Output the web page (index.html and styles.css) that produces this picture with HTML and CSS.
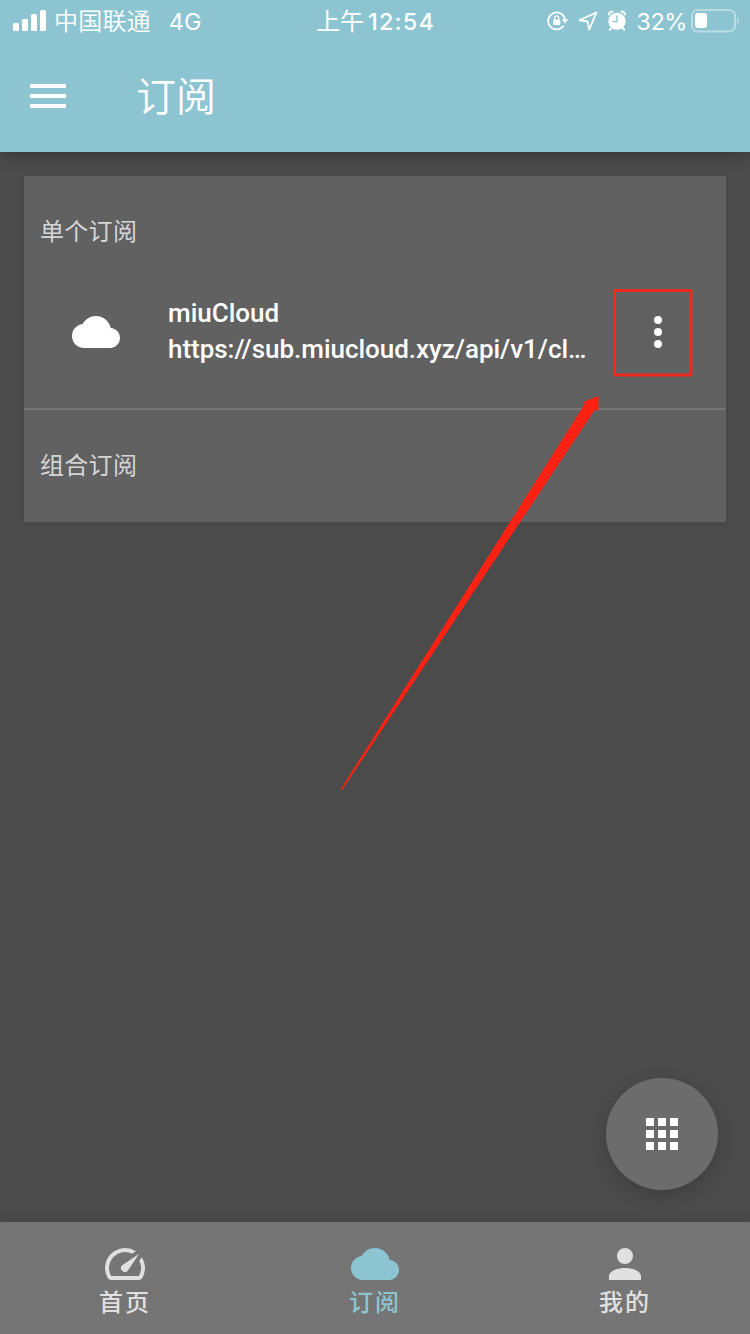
FILE: index.html
```html
<!DOCTYPE html>
<html lang="zh-CN">
<head>
<meta charset="utf-8">
<title>订阅</title>
<link rel="stylesheet" href="styles.css">
</head>
<body>
<div class="screen">
  <header class="header">
    <div class="status">
      <div class="status-left">
        <svg class="signal" viewBox="0 0 33 22" fill="#fff"><rect x="0" y="13" width="6" height="8" rx="1.5"/><rect x="9" y="9" width="6" height="12" rx="1.5"/><rect x="18" y="4" width="6" height="17" rx="1.5"/><rect x="27" y="0" width="6" height="21" rx="1.5"/></svg>
        <span class="carrier">中国联通</span>
        <span class="network">4G</span>
      </div>
      <div class="status-time"><span>上午</span><span class="clock">12:54</span></div>
      <div class="status-right">
        <svg class="lock" viewBox="0 0 24 22"><path d="M17.6 15.8A8.5 8.5 0 1 1 18.9 9" fill="none" stroke="#fff" stroke-width="1.7"/><path d="M15.8 9.2h6.4l-3.2 4.4z" fill="#fff"/><rect x="7.2" y="9.5" width="7" height="5.6" rx=".8" fill="#fff"/><path d="M8.7 10V8a2 2 0 0 1 4 0v2" fill="none" stroke="#fff" stroke-width="1.3"/></svg>
        <svg class="location" viewBox="0 0 20 20"><path d="M18.5 1.5L1.5 9.2l8 1.2L11.2 18.5z" fill="none" stroke="#fff" stroke-width="1.9" stroke-linejoin="round"/></svg>
        <svg class="alarm" viewBox="0 0 20 22"><circle cx="10" cy="11.2" r="8.6" fill="#fff"/><path d="M1.8 4.6A4 4 0 0 1 5.6 1.6M18.2 4.6a4 4 0 0 0-3.8-3M4.5 17.5L2.8 20M15.5 17.5l1.7 2.5" fill="none" stroke="#fff" stroke-width="2" stroke-linecap="round"/><path d="M10 5.6v6H5.4" fill="none" stroke="#8cc5d1" stroke-width="1.4"/></svg>
        <span class="percent">32%</span>
        <svg class="battery" viewBox="0 0 49 24"><rect x="1" y="1" width="43" height="21.5" rx="5.5" fill="none" stroke="#b9dce3" stroke-width="2"/><rect x="4" y="4" width="12" height="15" rx="3" fill="#fff"/><path d="M46 8.5c2.3 1 2.3 6 0 7z" fill="#b9dce3"/></svg>
      </div>
    </div>
    <div class="toolbar">
      <svg class="menu" viewBox="0 0 36 24" fill="#fff"><path d="M0 0h36v4H0zM0 10h36v4H0zM0 20h36v4H0z"/></svg>
      <h1 class="title">订阅</h1>
    </div>
  </header>

  <main class="content">
    <section class="card">
      <div class="subheader">单个订阅</div>
      <div class="item">
        <svg class="item-icon" viewBox="0 0 24 24" fill="#fff"><path d="M19.35 10.04C18.67 6.59 15.64 4 12 4 9.11 4 6.6 5.64 5.35 8.04 2.34 8.36 0 10.91 0 14c0 3.31 2.69 6 6 6h13c2.76 0 5-2.24 5-5 0-2.64-2.05-4.78-4.65-4.96z"/></svg>
        <div class="item-text">
          <div class="item-name">miuCloud</div>
          <div class="item-url">https://sub.miucloud.xyz/api/v1/cl…</div>
        </div>
        <div class="more"><svg class="dots" viewBox="0 0 8 32" fill="#fff"><circle cx="4" cy="4" r="4"/><circle cx="4" cy="16" r="4"/><circle cx="4" cy="28" r="4"/></svg></div>
      </div>
      <div class="group"><div class="subheader">组合订阅</div></div>
    </section>
  </main>

  <nav class="tabs">
    <div class="tab">
      <svg class="tab-icon" viewBox="0 0 24 24" fill="currentColor"><path d="M20.38 8.57l-1.23 1.85a8 8 0 0 1-.22 7.58H5.07A8 8 0 0 1 15.58 6.85l1.85-1.23A10 10 0 0 0 3.35 19a2 2 0 0 0 1.72 1h13.85a2 2 0 0 0 1.74-1 10 10 0 0 0-.27-10.44zm-9.79 6.84a2 2 0 0 0 2.83 0l5.66-8.49-8.49 5.66a2 2 0 0 0 0 2.83z"/></svg>
      <span class="tab-label">首页</span>
    </div>
    <div class="tab tab-active">
      <svg class="tab-icon" viewBox="0 0 24 24" fill="currentColor"><path d="M19.35 10.04C18.67 6.59 15.64 4 12 4 9.11 4 6.6 5.64 5.35 8.04 2.34 8.36 0 10.91 0 14c0 3.31 2.69 6 6 6h13c2.76 0 5-2.24 5-5 0-2.64-2.05-4.78-4.65-4.96z"/></svg>
      <span class="tab-label">订阅</span>
    </div>
    <div class="tab">
      <svg class="tab-icon" viewBox="0 0 24 24" fill="currentColor"><path d="M12 4a4 4 0 1 1 0 8 4 4 0 0 1 0-8m0 10c4.42 0 8 1.79 8 4v2H4v-2c0-2.21 3.58-4 8-4"/></svg>
      <span class="tab-label">我的</span>
    </div>
  </nav>

  <div class="fab"><svg class="grid" viewBox="0 0 32 32" fill="#fff"><path d="M0 0h8v8H0zM12 0h8v8h-8zM24 0h8v8h-8zM0 12h8v8H0zM12 12h8v8h-8zM24 12h8v8h-8zM0 24h8v8H0zM12 24h8v8h-8zM24 24h8v8h-8z"/></svg></div>
  <svg class="marks" viewBox="0 0 750 1334"><rect x="614.5" y="290.5" width="76.5" height="84.5" rx="1" fill="none" stroke="#ef2b20" stroke-width="3"/><path d="M340.5 789.5L584.5 404.5 584.5 401.5 598.5 396 598.3 411 595 409.5 342 790z" fill="#ff2112"/></svg>
</div>
</body>
</html>
```
FILE: styles.css
```css
* { box-sizing: border-box; }
body { margin: 0; font-family: Roboto, "Noto Sans CJK SC", sans-serif; color: #fff; }
svg { display: block; flex: none; }
.screen { position: relative; width: 750px; height: 1334px; display: flex; flex-direction: column; background: #4b4b4b; overflow: hidden; }

.header { height: 152px; background: #8cc5d1; box-shadow: 0 4px 14px rgba(0,0,0,.24); z-index: 1; }
.status { height: 40px; display: grid; grid-template-columns: 250px 250px 250px; font: 24px/40px Inter, "Noto Sans CJK SC", sans-serif; white-space: nowrap; }
.status-left, .status-right, .status-time { display: flex; align-items: center; }
.status span { padding-top: 2px; }
.status-left { padding-left: 13px; }
.signal { width: 33px; height: 22px; }
.carrier { margin-left: 8px; font-weight: 350; letter-spacing: .2px; }
.network { margin-left: 18px; font-size: 23.5px; }
.status-time { justify-content: center; gap: 4px; padding-left: 1px; font-weight: 400; }
.clock { font-weight: 500; font-size: 23.5px; letter-spacing: 1.1px; }
.status-right { justify-content: flex-end; padding-right: 10px; }
.lock { width: 24px; height: 22px; }
.location { width: 20px; height: 20px; margin-left: 8px; }
.alarm { width: 20px; height: 22px; margin-left: 9px; }
.percent { margin-left: 9px; font-size: 23.5px; letter-spacing: -.4px; }
.battery { width: 49px; height: 24px; margin-left: 4px; }
.toolbar { height: 112px; display: flex; align-items: center; padding-left: 30px; }
.menu { width: 36px; height: 24px; }
.title { margin: 0 0 0 70px; padding-top: 3px; font-size: 40px; line-height: 56px; font-weight: 350; }

.content { flex: 1; padding: 24px; }
.card { background: #616161; height: 346px; box-shadow: 0 2px 6px rgba(0,0,0,.06); }
.subheader { height: 112px; padding: 0 16px; font-size: 24px; line-height: 112px; color: #d6d6d6; letter-spacing: .3px; }
.item { height: 120px; display: flex; align-items: flex-start; padding: 0 64px 0 48px; }
.item-icon { width: 48px; height: 48px; margin-top: 20px; }
.item-text { width: 430px; margin-left: 48px; margin-top: 7px; font-weight: 500; font-size: 26px; line-height: 36px; white-space: nowrap; }
.item-url { letter-spacing: -.03px; }
.more { margin-left: auto; padding-top: 28px; }
.dots { width: 8px; height: 32px; }
.group { border-top: 2px solid #757575; }

.tabs { height: 112px; display: grid; grid-template-columns: repeat(3, 1fr); background: #757575; box-shadow: 0 -2px 10px rgba(0,0,0,.12); }
.tab { display: flex; flex-direction: column; align-items: center; padding-top: 18px; color: #e0e0e0; }
.tab-active { color: #8cc5d1; }
.tab-icon { width: 48px; height: 48px; }
.tab-label { font-size: 24px; line-height: 28px; padding-top: 1px; font-weight: 500; letter-spacing: 2px; }

.fab { position: absolute; left: 606px; top: 1078px; width: 112px; height: 112px; border-radius: 50%; background: #6c6c6c; display: flex; align-items: center; justify-content: center; box-shadow: 0 6px 18px rgba(0,0,0,.17); }
.grid { width: 32px; height: 32px; }
.marks { position: absolute; left: 0; top: 0; width: 750px; height: 1334px; z-index: 2; pointer-events: none; }
```
